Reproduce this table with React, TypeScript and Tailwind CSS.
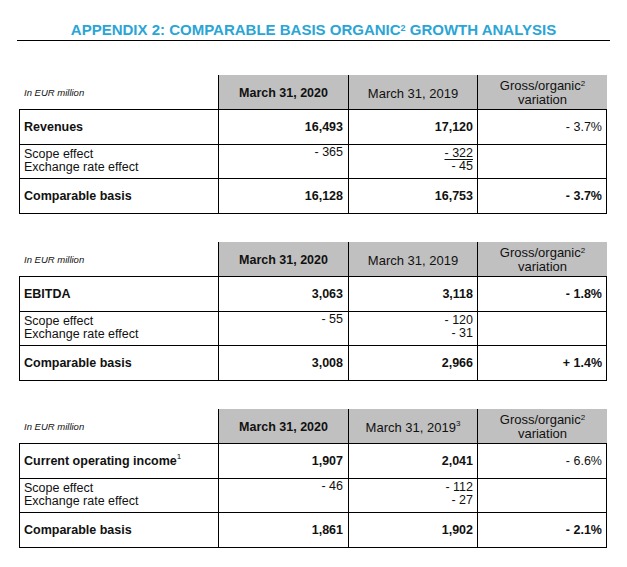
import * as React from "react";

type Section = {
  label: React.ReactNode;
  y2019: React.ReactNode;
  main: [string, string, string];
  mainPctBold?: boolean;
  scope: [string, string];
  scope2019Underline?: boolean;
  comparable: [string, string, string];
};

const sections: Section[] = [
  {
    label: "Revenues",
    y2019: "March 31, 2019",
    main: ["16,493", "17,120", "- 3.7%"],
    scope: ["- 365", "- 322"],
    scope2019Underline: true,
    comparable: ["16,128", "16,753", "- 3.7%"],
  },
  {
    label: "EBITDA",
    y2019: "March 31, 2019",
    main: ["3,063", "3,118", "- 1.8%"],
    mainPctBold: true,
    scope: ["- 55", "- 120"],
    comparable: ["3,008", "2,966", "+ 1.4%"],
  },
  {
    label: (
      <>
        Current operating income<sup className="text-[8px] font-normal">1</sup>
      </>
    ),
    y2019: (
      <>
        March 31, 2019<sup className="text-[8px]">3</sup>
      </>
    ),
    main: ["1,907", "2,041", "- 6.6%"],
    scope: ["- 46", "- 112"],
    comparable: ["1,861", "1,902", "- 2.1%"],
  },
];

const exchange = ["- 45", "- 31", "- 27"];

function Table({ s, idx }: { s: Section; idx: number }) {
  return (
    <div className="w-[588px]">
      <div className="grid grid-cols-[199px_130px_129px_130px] h-[34px]">
        <div className="flex items-center pl-[5px] pt-[2px] text-[9.5px] italic">In EUR million</div>
        <div className="bg-[#c0c0c0] border-l border-black flex items-center justify-center pt-[3px] text-[12.5px] font-bold">
          March 31, 2020
        </div>
        <div className="bg-[#c0c0c0] border-l border-black flex items-center justify-center pt-[3px] text-[13px]">
          {s.y2019}
        </div>
        <div className="bg-[#c0c0c0] border-l border-black flex flex-col items-center justify-center pt-[1px] text-[13px] leading-[14px]">
          <span>
            Gross/organic<sup className="text-[8px] leading-none">2</sup>
          </span>
          <span>variation</span>
        </div>
      </div>

      <div className="border border-black text-[12.5px]">
        <div className="grid grid-cols-[198px_130px_129px_129px] h-[35px] border-b border-black font-bold">
          <div className="flex items-center pl-[4px]">{s.label}</div>
          <div className="border-l border-black flex items-center justify-end pr-[5px]">{s.main[0]}</div>
          <div className="border-l border-black flex items-center justify-end pr-[4px]">{s.main[1]}</div>
          <div className={`border-l border-black flex items-center justify-end pr-[4px] ${s.mainPctBold ? "font-bold" : "font-normal"}`}>
            {s.main[2]}
          </div>
        </div>

        <div className="grid grid-cols-[198px_130px_129px_129px] h-[34px] border-b border-black leading-[13px]">
          <div className="flex flex-col pl-[4px] pt-[3px]">
            <span>Scope effect</span>
            <span>Exchange rate effect</span>
          </div>
          <div className="border-l border-black flex justify-end pr-[5px] pt-[1px]">{s.scope[0]}</div>
          <div className="border-l border-black flex flex-col items-end pr-[4px] pt-[2px]">
            <span className={s.scope2019Underline ? "underline underline-offset-2" : ""}>{s.scope[1]}</span>
            <span>{exchange[idx]}</span>
          </div>
          <div className="border-l border-black" />
        </div>

        <div className="grid grid-cols-[198px_130px_129px_129px] h-[34px] font-bold">
          <div className="flex items-center pl-[4px]">Comparable basis</div>
          <div className="border-l border-black flex items-center justify-end pr-[5px]">{s.comparable[0]}</div>
          <div className="border-l border-black flex items-center justify-end pr-[4px]">{s.comparable[1]}</div>
          <div className="border-l border-black flex items-center justify-end pr-[4px]">{s.comparable[2]}</div>
        </div>
      </div>
    </div>
  );
}

export default function App() {
  return (
    <div className="w-[627px] h-[567px] bg-white text-[#111] font-['Liberation_Sans',Arial,sans-serif]">
      <div className="mx-[17px] pt-[21px] pb-[2px] border-b border-black text-center text-[15px] leading-[17px] font-bold text-[#2aa5d6]">
        APPENDIX 2: COMPARABLE BASIS ORGANIC<sup className="text-[9px]">2</sup> GROWTH ANALYSIS
      </div>

      <div className="ml-[19px] mt-[34px] flex flex-col gap-[28px]">
        {sections.map((s, i) => (
          <Table key={i} s={s} idx={i} />
        ))}
      </div>
    </div>
  );
}
